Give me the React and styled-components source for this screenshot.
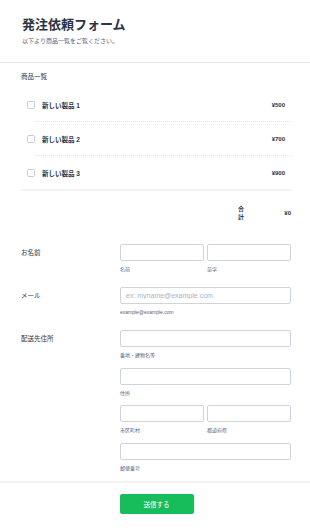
import React from "react";
import styled, { createGlobalStyle } from "styled-components";

const Global = createGlobalStyle`
  html, body { margin: 0; padding: 0; background: #fff; }
  body { font-family: "Liberation Sans", "Noto Sans CJK JP", sans-serif; color: #2c3345; }
  * { box-sizing: border-box; }
`;

const Page = styled.div`
  width: 310px;
  background: #fff;
`;

const Header = styled.header`
  height: 63px;
  padding: 17px 22px 0;
  border-bottom: 1px solid #e6e7ee;
`;

const Title = styled.h1`
  margin: 0;
  font-size: 13px;
  line-height: 16px;
  font-weight: 700;
  color: #2c3345;
`;

const Subtitle = styled.p`
  margin: 4px 0 0;
  font-size: 6px;
  line-height: 8px;
  color: #57647e;
`;

const Body = styled.div`
  padding: 0 18px 9px 21px;
`;

const SectionLabel = styled.div`
  margin-top: 10px;
  font-size: 6.5px;
  line-height: 8px;
  color: #2c3345;
`;

const List = styled.div`
  margin-top: 7px;
  border-bottom: 2px solid #f3f3f6;
`;

const Row = styled.div`
  height: 33px;
  display: flex;
  align-items: center;
  padding: 0 7px 0 6px;
  gap: 7px;
`;

const Check = styled.span`
  width: 8px;
  height: 8px;
  border: 1px solid #c8cdd8;
  border-radius: 1.5px;
  background: #fff;
  flex: none;
`;

const ProductName = styled.span`
  flex: 1;
  font-size: 6.5px;
  font-weight: 700;
  color: #2c3345;
`;

const Price = styled.span`
  font-size: 6px;
  font-weight: 700;
  color: #2c3345;
`;

const Separator = styled.div`
  margin-left: 14px;
  border-top: 1px dotted #e3e4ea;
`;

const TotalRow = styled.div`
  margin-top: 14px;
  display: flex;
  justify-content: flex-end;
  align-items: center;
`;

const TotalLabel = styled.span`
  width: 6px;
  font-size: 6px;
  line-height: 8px;
  font-weight: 700;
  word-break: break-all;
`;

const TotalAmount = styled.span`
  width: 48px;
  text-align: right;
  font-size: 6px;
  font-weight: 700;
  padding-right: 1px;
`;

const Fields = styled.div`
  margin-top: 23px;
  display: flex;
  flex-direction: column;
  gap: 14px;
`;

const Field = styled.div`
  display: grid;
  grid-template-columns: 99px 171px;
`;

const Label = styled.label`
  font-size: 6.5px;
  line-height: 17px;
  color: #2c3345;
`;

const Controls = styled.div`
  display: flex;
  flex-direction: column;
  gap: 8.5px;
`;

const Pair = styled.div`
  display: grid;
  grid-template-columns: 1fr 1fr;
  gap: 3px;
`;

const Cell = styled.div`
  display: flex;
  flex-direction: column;
`;

const Input = styled.input`
  width: 100%;
  height: 17px;
  border: 1px solid #cfd3df;
  border-radius: 2px;
  padding: 0 5px;
  font-family: inherit;
  font-size: 7px;
  color: #2c3345;
  outline: none;
  &::placeholder { color: #a9b3c8; }
`;

const SubLabel = styled.span`
  margin-top: 4px;
  font-size: 5px;
  line-height: 8px;
  color: #57647e;
`;

const Footer = styled.footer`
  border-top: 2px solid #f3f3f6;
  padding: 11px 18px 0 21px;
  display: flex;
  justify-content: center;
`;

const Submit = styled.button`
  width: 74px;
  height: 20px;
  border: none;
  border-radius: 2px;
  background: #18bd5b;
  color: #fff;
  font-family: inherit;
  font-size: 6.5px;
  cursor: pointer;
`;

const products = [
  { name: "新しい製品 1", price: "¥500" },
  { name: "新しい製品 2", price: "¥700" },
  { name: "新しい製品 3", price: "¥900" },
];

function Single({ sub, placeholder }) {
  return (
    <Cell>
      <Input placeholder={placeholder} />
      <SubLabel>{sub}</SubLabel>
    </Cell>
  );
}

export default function App() {
  return (
    <Page>
      <Global />
      <Header>
        <Title>発注依頼フォーム</Title>
        <Subtitle>以下より商品一覧をご覧ください。</Subtitle>
      </Header>
      <Body>
        <SectionLabel>商品一覧</SectionLabel>
        <List>
          {products.map((p, i) => (
            <React.Fragment key={p.name}>
              {i > 0 && <Separator />}
              <Row>
                <Check />
                <ProductName>{p.name}</ProductName>
                <Price>{p.price}</Price>
              </Row>
            </React.Fragment>
          ))}
        </List>
        <TotalRow>
          <TotalLabel>合計</TotalLabel>
          <TotalAmount>¥0</TotalAmount>
        </TotalRow>
        <Fields>
          <Field>
            <Label>お名前</Label>
            <Pair>
              <Single sub="名前" />
              <Single sub="苗字" />
            </Pair>
          </Field>
          <Field>
            <Label>メール</Label>
            <Controls>
              <Single sub="example@example.com" placeholder="ex: myname@example.com" />
            </Controls>
          </Field>
          <Field>
            <Label>配送先住所</Label>
            <Controls>
              <Single sub="番地・建物名等" />
              <Single sub="住所" />
              <Pair>
                <Single sub="市区町村" />
                <Single sub="都道府県" />
              </Pair>
              <Single sub="郵便番号" />
            </Controls>
          </Field>
        </Fields>
      </Body>
      <Footer>
        <Submit>送信する</Submit>
      </Footer>
    </Page>
  );
}
